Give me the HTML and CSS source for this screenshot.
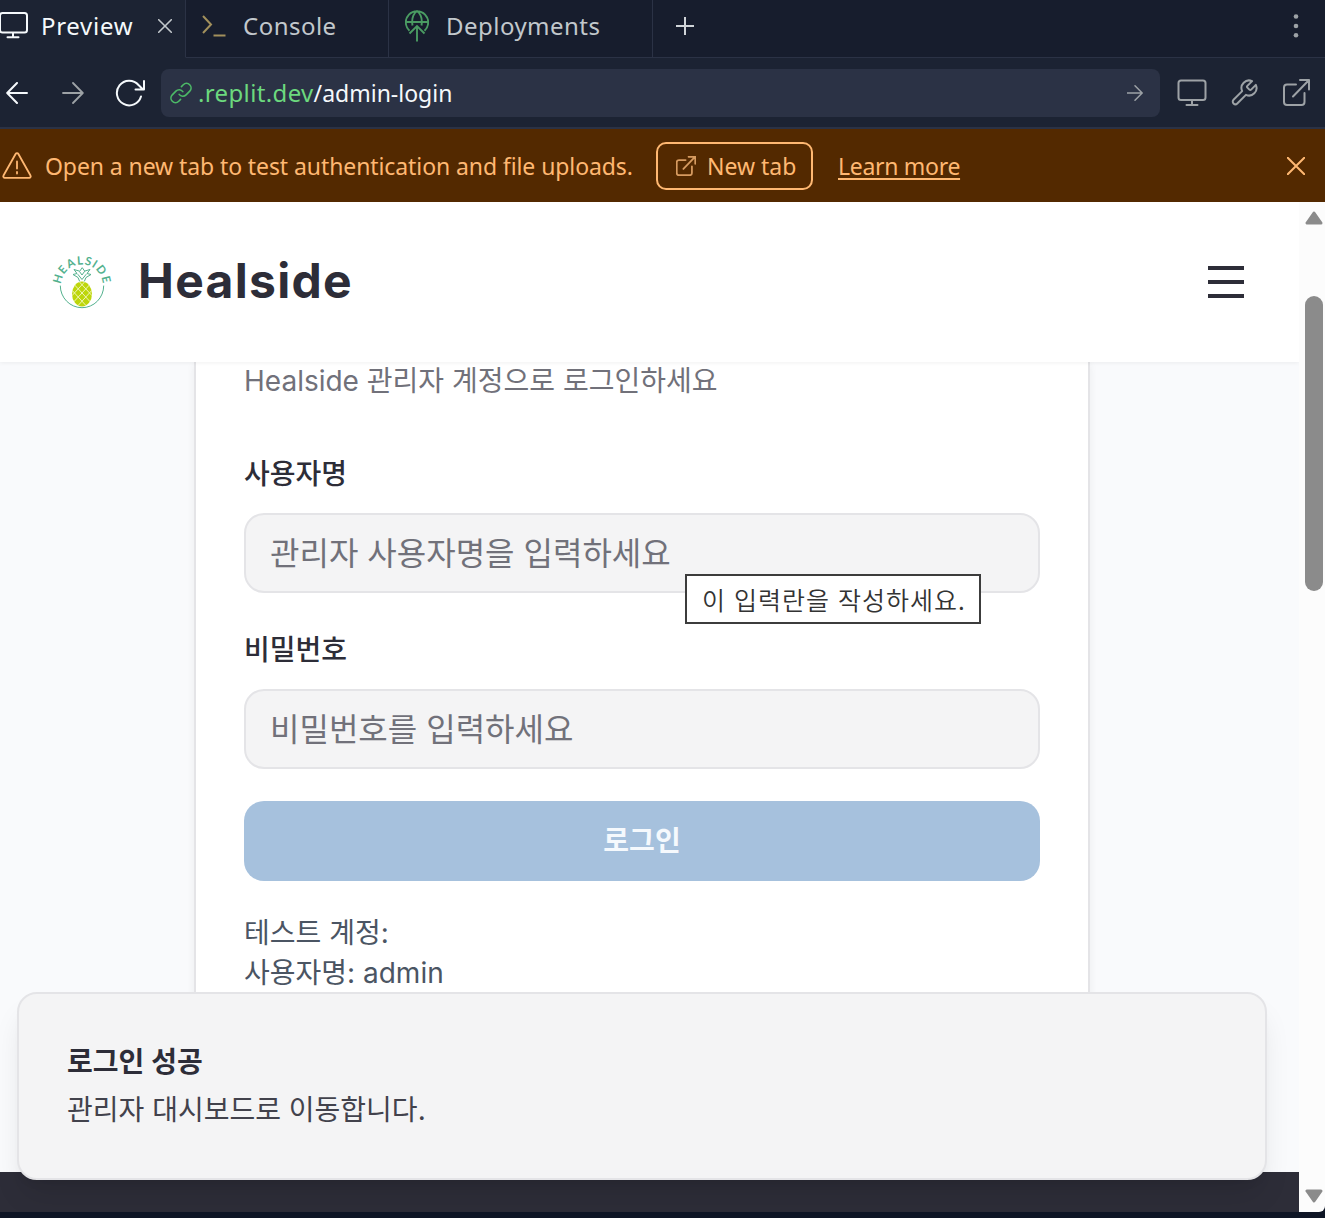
FILE: index.html
```html
<!DOCTYPE html>
<html lang="ko">
<head>
<meta charset="utf-8">
<title>Healside</title>
<link rel="stylesheet" href="styles.css">
</head>
<body>
<div class="app">
  <nav class="tabs">
    <div class="tab tab-preview">
      <svg class="i-monitor" width="28" height="28" viewBox="0 0 28 28"><rect x="0" y="1" width="27" height="19.500" rx="2.500"/><path d="M13 21v4M7.500 25.200h11"/></svg>
      <span class="t-preview">Preview</span>
      <svg class="i-close" width="14" height="14" viewBox="0 0 14 14"><path d="M.7.7l12.600 12.600M13.300.7L.7 13.300"/></svg>
    </div>
    <div class="tab tab-console">
      <svg class="i-console" width="24" height="22" viewBox="0 0 24 22"><path d="M1 1l8 8.500L1 18M11.500 20.500h12"/></svg>
      <span class="t-console">Console</span>
    </div>
    <div class="tab tab-deploy">
      <svg class="i-deploy" width="24" height="32" viewBox="0 0 24 32"><path d="M4.500 20.700A11.200 11.200 0 1 1 19.500 20.700M1 12h22M7.500 15.500C6.500 9 8 4 12 1c4 3 5.500 8 4.500 14.500M4.500 23.500L12 16l7.500 7.500M12 16v15.500"/></svg>
      <span class="t-deploy">Deployments</span>
    </div>
    <div class="tab-rest">
      <svg class="i-plus" width="18" height="18" viewBox="0 0 18 18"><path d="M9 0v18M0 9h18"/></svg>
      <svg class="i-dots" width="6" height="24" viewBox="0 0 6 24"><circle cx="3" cy="2.500" r="2.300"/><circle cx="3" cy="12" r="2.300"/><circle cx="3" cy="21.300" r="2.300"/></svg>
    </div>
  </nav>
  <div class="toolbar">
    <svg class="i-back" width="22" height="22" viewBox="0 0 22 22"><path d="M21 11H1.500M11 1L1.200 11 11 21"/></svg>
    <svg class="i-forward" width="22" height="22" viewBox="0 0 22 22"><path d="M1 11h19.500M11 1l9.800 10L11 21"/></svg>
    <svg class="i-reload" width="30" height="28" viewBox="0 0 30 28"><path d="M26 17.500A12.300 12.300 0 1 1 23.500 6L28 10.500M29 2v8.500h-8.500"/></svg>
    <div class="address">
      <svg class="i-link" width="22" height="22" viewBox="0 0 24 24"><path d="M10 13.500a5 5 0 0 0 7.540.54l4-4a5 5 0 0 0-7.070-7.070l-2 2M14 10.500a5 5 0 0 0-7.540-.54l-4 4a5 5 0 0 0 7.070 7.070l2-2"/></svg>
      <span class="url"><span class="host">.replit.dev</span><span class="path">/admin-login</span></span>
      <svg class="i-go" width="16" height="16" viewBox="0 0 16 16"><path d="M0 8h15M8 .8L15.200 8 8 15.200"/></svg>
    </div>
    <svg class="i-device" width="30" height="28" viewBox="0 0 30 28"><rect x="1.500" y="1.500" width="27" height="19.500" rx="2.500"/><path d="M15 21.500v4M9.500 26h11"/></svg>
    <svg class="i-wrench" width="30" height="30" viewBox="0 0 24 24"><path d="M14.700 6.300a1 1 0 0 0 0 1.400l1.600 1.600a1 1 0 0 0 1.400 0l3.770-3.770a6 6 0 0 1-7.940 7.940l-6.910 6.910a2.120 2.120 0 0 1-3-3l6.910-6.910a6 6 0 0 1 7.940-7.940z"/></svg>
    <svg class="i-external" width="27" height="27" viewBox="0 0 27 27"><path d="M13 5.500H4a3 3 0 0 0-3 3V23a3 3 0 0 0 3 3h14.500a3 3 0 0 0 3-3v-9M17 1h9v9.500M10 17.500L26 1"/></svg>
  </div>
  <div class="banner">
    <svg class="i-warn" width="30" height="27" viewBox="0 0 30 27"><path d="M13.600 2L1.500 23.500a1.500 1.500 0 0 0 1.300 2.300h24.400a1.500 1.500 0 0 0 1.300-2.300L16.400 2a1.600 1.600 0 0 0-2.800 0zM15 9.500v7M15 20v1.500"/></svg>
    <span class="t-banner">Open a new tab to test authentication and file uploads.</span>
    <a class="newtab">
      <svg class="i-ext2" width="20" height="20" viewBox="0 0 27 27"><path d="M13 5.500H4a3 3 0 0 0-3 3V23a3 3 0 0 0 3 3h14.500a3 3 0 0 0 3-3v-9M17 1h9v9.500M10 17.500L26 1"/></svg>
      <span class="t-new">New tab</span>
    </a>
    <a class="learn">Learn more</a>
    <svg class="i-dismiss" width="18" height="18" viewBox="0 0 18 18"><path d="M.5.5l17 17M17.500.5l-17 17"/></svg>
  </div>
  <div class="frame">
    <div class="page">
      <header class="site-header">
        <svg class="logo" width="64" height="60" viewBox="50 252 64 60">
          <defs>
            <path id="arc" d="M61 289V285.500A21 21 0 0 1 103 285.500V289"/>
            <clipPath id="body"><ellipse cx="82" cy="294" rx="10" ry="12.500"/></clipPath>
          </defs>
          <text class="logo-text" text-anchor="middle"><textPath href="#arc" startOffset="50%">HEALSIDE</textPath></text>
          <path class="logo-ring" d="M60.300 286a21.700 21.700 0 0 0 43.400 0"/>
          <path class="logo-leaf" d="M82 268l-2.500 3.500L82 275l2.500-3.500zM79 271l-5-1.500 3 4-4 1 5 3 1.500 3.500M85 271l5-1.500-3 4 4 1-5 3-1.500 3.500M78 274.500l4 5 4-5"/>
          <ellipse class="logo-fruit" cx="82" cy="294" rx="10" ry="12.500"/>
          <path class="logo-grid" clip-path="url(#body)" d="M70 288l20 22M70 280l25 27M74 276l22 24M82 277l14 15M94 288l-20 22M94 280l-25 27M90 276l-22 24M82 277l-14 15"/>
        </svg>
        <span class="brand">Healside</span>
        <svg class="menu" width="36" height="32" viewBox="0 0 36 32"><path d="M0 2h36M0 16h36M0 30h36"/></svg>
      </header>
      <main class="main">
        <section class="card">
          <p class="sub">Healside 관리자 계정으로 로그인하세요</p>
          <label class="label">사용자명</label>
          <div class="field">관리자 사용자명을 입력하세요</div>
          <label class="label label-pw">비밀번호</label>
          <div class="field">비밀번호를 입력하세요</div>
          <button class="submit">로그인</button>
          <p class="hint">테스트 계정:<br>사용자명: admin</p>
        </section>
      </main>
      <footer class="site-footer"></footer>
      <div class="tooltip">이 입력란을 작성하세요.</div>
      <div class="toast">
        <div class="toast-title">로그인 성공</div>
        <div class="toast-body">관리자 대시보드로 이동합니다.</div>
      </div>
    </div>
    <div class="scrollbar">
      <svg class="up" width="18" height="14" viewBox="0 0 18 14"><path d="M9 2L2 12h14z"/></svg>
      <div class="thumb"></div>
      <svg class="down" width="18" height="14" viewBox="0 0 18 14"><path d="M9 12L2 2h14z"/></svg>
    </div>
  </div>
</div>
</body>
</html>
```
FILE: styles.css
```css
* { box-sizing: border-box; }
body {
  margin: 0;
  width: 1325px;
  height: 1218px;
  overflow: hidden;
  background: #0e1525;
  font-family: "Inter", "Noto Sans CJK KR", sans-serif;
}
p { margin: 0; }
svg { display: block; flex: none; fill: none; stroke: currentColor; stroke-width: 2; stroke-linejoin: round; stroke-linecap: round; }
span, a { white-space: nowrap; }

.tabs, .toolbar, .banner { display: flex; align-items: center; font-family: "Noto Sans", sans-serif; font-size: 24px; }

/* Workspace tabs */
.tabs { height: 58px; background: #171d2d; color: #c2c8cc; }
.tab, .tab-rest { display: flex; align-items: center; height: 58px; padding-bottom: 5px; border-right: 1px solid #2b3245; border-bottom: 1px solid #2b3245; }
.tab span { padding-bottom: 2px; letter-spacing: .47px; }
.tab-preview { width: 186px; background: #1c2333; color: #f5f9fc; border-bottom-color: #1c2333; }
.tab-console { width: 203px; padding-left: 16px; }
.tab-deploy { width: 264px; padding-left: 16px; }
.tab-rest { flex: 1; border-right: 0; padding-left: 23px; }
.tab .t-preview { width: 93px; margin-left: 13px; letter-spacing: .7px; }
.t-console { margin-left: 17px; }
.t-deploy { margin-left: 17px; }
.i-close { margin-left: 24px; color: #c2c8cc; stroke-width: 1.6; }
.i-console { color: #a2905c; stroke-linecap: butt; stroke-linejoin: miter; }
.i-deploy { color: #4a9b62; stroke-width: 1.9; stroke-linecap: butt; stroke-linejoin: miter; }
.i-plus { color: #d0d4d8; stroke-linecap: butt; }
.i-dots { margin-left: auto; margin-right: 26px; fill: #9da2a6; stroke: none; }

/* Browser toolbar */
.toolbar { height: 71px; padding: 0 15px 0 6px; background: #1c2333; border-bottom: 2px solid #2b3245; color: #9da2a6; }
.i-back { color: #f5f9fc; }
.i-forward { margin-left: 34px; stroke-width: 1.8; }
.i-reload { margin-left: 31px; color: #f5f9fc; }
.address { display: flex; align-items: center; width: 999px; height: 48px; margin-left: 16px; padding: 0 17px 0 9px; border-radius: 8px; background: #2b3245; }
.i-link { color: #4cb967; stroke-width: 1.8; }
.url { margin-left: 6px; }
.host { color: #6cd97e; letter-spacing: .36px; }
.path { color: #f5f9fc; font-size: 23px; }
.i-go { margin-left: auto; stroke-width: 1.5; }
.i-device { margin-left: 17px; }
.i-wrench { margin-left: 22px; stroke-width: 1.6; }
.i-external { margin-left: 24px; }

/* Notice banner */
.banner { height: 73px; padding: 0 20px 0 2px; background: #532900; color: #ffb872; font-size: 23px; }
.i-warn { stroke-width: 1.8; }
.t-banner { width: 588px; margin-left: 13px; letter-spacing: -.09px; }
.newtab { display: flex; align-items: center; width: 157px; height: 48px; margin-left: 23px; padding-left: 18px; border: 2px solid #ffb872; border-radius: 10px; }
.i-ext2 { color: #d79b60; stroke-width: 2.4; }
.t-new { margin-left: 11px; }
.learn { margin-left: 25px; letter-spacing: -.3px; text-decoration: underline; text-underline-offset: 3px; text-decoration-thickness: 2px; }
.i-dismiss { margin-left: auto; }

/* Previewed site */
.frame { display: flex; height: 1010px; }
.page { position: relative; display: flex; flex-direction: column; width: 1299px; height: 1010px; overflow: hidden; background: #f9fafc; }
.site-header { position: relative; z-index: 1; display: flex; align-items: center; flex: none; height: 160px; padding: 0 55px 0 50px; background: #fff; box-shadow: 0 1px 4px rgba(0, 0, 0, .06); }
.logo { stroke-width: 1; }
.logo-text { font: 700 11.500px "Lato", sans-serif; letter-spacing: 1.100px; fill: #53b18e; stroke: none; }
.logo-ring, .logo-leaf { stroke: #53b18e; }
.logo-fruit { fill: #bdd60b; stroke: none; }
.logo-grid { stroke: #f0f5b4; }
.brand { margin-left: 24px; padding-bottom: 4px; font-size: 48px; font-weight: 700; letter-spacing: 1.300px; color: #2d2d38; }
.menu { margin-left: auto; color: #2d2d38; stroke-width: 4; stroke-linecap: butt; }
.main { display: flex; justify-content: center; flex: none; height: 810px; padding-right: 15px; }
.card { width: 896px; padding: 0 48px; background: #fff; border: solid #e4e4e7; border-width: 0 2px; box-shadow: 0 2px 8px rgba(0, 0, 0, .06); }
.sub { height: 40px; line-height: 39px; font-size: 28px; color: #71717a; }
.label { display: block; height: 28px; margin-top: 58px; margin-bottom: 25px; line-height: 28px; font-size: 28px; font-weight: 500; color: #2d2d38; }
.label-pw { margin-top: 43px; margin-bottom: 25px; }
.field { height: 80px; padding: 0 24px; border: 2px solid #e4e4e7; border-radius: 20px; background: #f4f4f5; line-height: 78px; font-size: 32px; color: #71717a; }
.submit { display: block; width: 100%; height: 80px; margin: 32px 0; padding: 0; border: 0; border-radius: 20px; background: #a6c1dd; color: #f5f9fd; font: 600 28px/80px "Inter", "Noto Sans CJK KR", sans-serif; }
.hint { line-height: 40px; font-size: 28px; color: #4b5563; }
.site-footer { flex: 1; background: #2d2d38; }
.tooltip { position: absolute; z-index: 2; left: 685px; top: 372px; width: 296px; height: 50px; padding-left: 15px; border: 2px solid #3c3c3c; background: #fff; font-family: "Noto Sans CJK KR", sans-serif; font-weight: 350; font-size: 25px; line-height: 46px; letter-spacing: 1px; color: #333; white-space: nowrap; }
.toast { position: absolute; z-index: 3; left: 17px; top: 790px; width: 1250px; height: 188px; padding: 48px 48px 44px; border: 2px solid #e4e4e7; border-radius: 20px; background: #f4f4f5; box-shadow: 0 20px 30px -6px rgba(0, 0, 0, .1), 0 8px 12px -8px rgba(0, 0, 0, .1); font-size: 28px; line-height: 40px; color: #2d2d38; }
.toast-title { font-weight: 600; }
.toast-body { margin-top: 8px; color: #42424c; }

/* Scrollbar */
.scrollbar { display: flex; flex-direction: column; width: 26px; padding: 9px 0 9px 6px; background: #fcfcfc; border-bottom-right-radius: 6px; }
.scrollbar svg { fill: #8b8b8b; stroke: #8b8b8b; stroke-width: 3; }
.thumb { width: 18px; height: 295px; margin-top: 71px; border-radius: 9px; background: #8b8b8b; }
.down { margin-top: auto; }
```
